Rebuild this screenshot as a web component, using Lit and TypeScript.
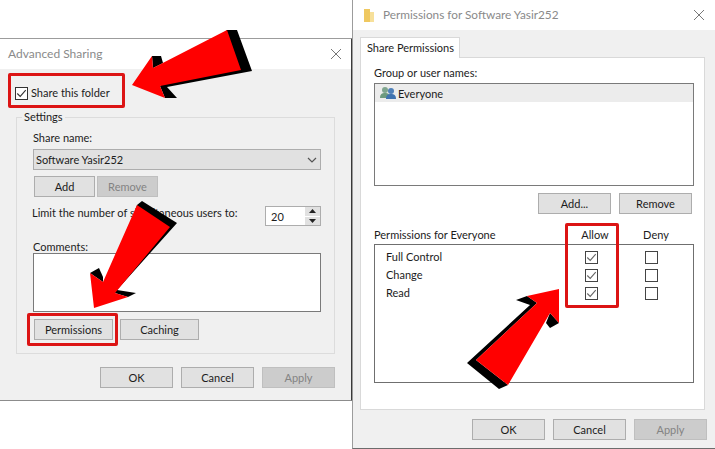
import {LitElement, html, css, svg} from 'lit';
import {customElement} from 'lit/decorators.js';

const check = (cls = '') => html`
  <span class="box ${cls}">
    <svg viewBox="0 0 13 13" width="11" height="11"><path d="M1.5 6.5 L5 10 L11.5 2.5" fill="none" stroke="currentColor" stroke-width="1.3"/></svg>
  </span>`;

const closeIcon = html`
  <svg width="10" height="10" viewBox="0 0 10 10"><path d="M0 0 L10 10 M10 0 L0 10" stroke="#777" stroke-width="1"/></svg>`;

@customElement('app-root')
export class AppRoot extends LitElement {
  static styles = css`
    :host {
      display: block;
      position: relative;
      width: 715px;
      height: 449px;
      overflow: hidden;
      background: #fff;
      font-family: Lato, Roboto, sans-serif;
      font-size: 11px;
      color: #1c1c1c;
      white-space: nowrap;
    }

    .win {
      position: absolute;
      box-sizing: border-box;
      background: #f0f0f0;
      display: flex;
      flex-direction: column;
    }

    .win--share {
      left: 0;
      top: 38px;
      width: 353px;
      height: 363px;
      border-top: 1px solid #9c9c9c;
      border-bottom: 1px solid #8c8c8c;
      border-right: 2px solid #3a3a3a;
    }

    .win--perm {
      left: 352px;
      top: 0;
      width: 363px;
      height: 449px;
      border-left: 1px solid #9c9c9c;
      border-bottom: 1px solid #6c6c6c;
    }

    .title {
      height: 30px;
      flex: none;
      background: #fff;
      display: flex;
      align-items: center;
      color: #8a8a8a;
      font-size: 12px;
      padding: 0 10px 0 8px;
    }

    .win--perm .title { padding: 0 11px 0 11px; font-size: 11.8px; }
    .title .text { flex: 1; margin-bottom: 1px; }
    .title .folder { margin-right: 9px; }

    .body { flex: 1; display: flex; flex-direction: column; }

    .btn {
      box-sizing: border-box;
      width: 73px;
      height: 21px;
      border: 1px solid #adadad;
      background: #e1e1e1;
      display: flex;
      align-items: center;
      justify-content: center;
      flex: none;
      padding-bottom: 1px;
    }

    .btn--off { background: #cccccc; border-color: #bfbfbf; color: #838383; }
    .btn--small { width: 61px; }
    .btn--mid { width: 79px; }

    .row { display: flex; gap: 8px; }
    .row--tight { gap: 2px; }

    .footer { display: flex; justify-content: flex-end; gap: 8px; }

    .box {
      box-sizing: border-box;
      width: 13px;
      height: 13px;
      border: 1px solid #333;
      background: #fff;
      display: flex;
      align-items: center;
      justify-content: center;
      flex: none;
      color: #333;
    }

    .box--plain { background: transparent; }

    /* left dialog */
    .share-check {
      display: flex;
      align-items: center;
      gap: 3px;
      margin: 17px 0 0 15px;
      height: 14px;
    }

    .share-check span:last-child { margin-bottom: 2px; }

    .group {
      position: relative;
      box-sizing: border-box;
      margin: 17px 16px 0 16px;
      height: 237px;
      width: 319px;
      border: 1px solid #dcdcdc;
      padding: 13px 13px 0 16px;
      display: flex;
      flex-direction: column;
    }

    .legend {
      position: absolute;
      left: 5px;
      top: -9px;
      background: #f0f0f0;
      padding: 0 2px;
      line-height: 15px;
    }

    .label { line-height: 13px; padding-bottom: 2px; }

    .select {
      box-sizing: border-box;
      height: 21px;
      margin-top: 3px;
      border: 1px solid #adadad;
      background: #e1e1e1;
      display: flex;
      align-items: center;
      justify-content: space-between;
      padding: 0 3px 0 2px;
    }

    .row--add { margin: 6px 0 0 1px; }

    .limit {
      display: flex;
      justify-content: space-between;
      align-items: flex-start;
      margin-top: 9px;
      height: 20px;
    }

    .limit .label { margin-left: -1px; }

    .spin {
      box-sizing: border-box;
      width: 56px;
      height: 20px;
      border: 1px solid #adadad;
      background: #fff;
      display: flex;
      align-items: center;
      padding-left: 5px;
    }

    .spin .value { flex: 1; }

    .spin .spin-arrows {
      width: 15px;
      height: 18px;
      display: flex;
      flex-direction: column;
      gap: 1px;
    }

    .spin .spin-arrows span {
      flex: 1;
      background: #e1e1e1;
      display: flex;
      align-items: center;
      justify-content: center;
    }

    .label.comments { margin-top: 14px; padding-bottom: 0; }

    .textarea {
      box-sizing: border-box;
      height: 59px;
      background: #fff;
      border: 1px solid #7a7a7a;
    }

    .row--perm { margin: 7px 0 0 1px; gap: 7px; }

    .win--share .footer { padding: 13px 16px 0 0; }

    /* right dialog */
    .tabstrip { padding: 7px 0 0 7px; height: 20px; flex: none; display: flex; }

    .tab {
      box-sizing: border-box;
      width: 100px;
      height: 21px;
      background: #fff;
      border: 1px solid #d9d9d9;
      border-bottom: none;
      padding-left: 6px;
      line-height: 19px;
      position: relative;
      z-index: 1;
    }

    .panel {
      box-sizing: border-box;
      margin: 0 10px 0 7px;
      width: 345px;
      height: 353px;
      background: #fff;
      border: 1px solid #d9d9d9;
      padding: 8px 10px 0 13px;
      display: flex;
      flex-direction: column;
    }

    .names {
      box-sizing: border-box;
      height: 103px;
      margin-top: 2px;
      border: 1px solid #7a7a7a;
    }

    .names-row {
      height: 18px;
      background: #ececec;
      display: flex;
      align-items: center;
      gap: 2px;
      padding-left: 5px;
    }

    .row--names { justify-content: flex-end; margin: 7px 2px 0 0; }

    .perm-grid {
      box-sizing: border-box;
      display: grid;
      grid-template-columns: 191px 60px 62px;
      margin-top: 13px;
      height: 17px;
      padding-bottom: 2px;
      align-items: center;
    }

    .perm-grid .allow,
    .perm-grid .deny { text-align: center; }

    .perm-box {
      box-sizing: border-box;
      height: 139px;
      border: 1px solid #6f6f6f;
      padding: 3px 0 0 11px;
      display: flex;
      flex-direction: column;
    }

    .perm-row {
      display: grid;
      grid-template-columns: 199px 60px 13px;
      height: 18px;
      align-items: center;
    }

    .perm-row .name { margin-bottom: 2px; }
    .perm-row .box { color: #666; border-color: #444; }

    .win--perm .footer { padding: 9px 8px 0 0; }

    /* annotations over the dialogs */
    .mark {
      position: absolute;
      box-sizing: border-box;
      border: 3px solid #dc1414;
      border-radius: 2px;
    }

    .mark--share { left: 8px; top: 73px; width: 117px; height: 35px; }
    .mark--perm { left: 27px; top: 313px; width: 91px; height: 33px; }
    .mark--allow { left: 565px; top: 223px; width: 54px; height: 85px; }

    .arrows-layer {
      position: absolute;
      left: 0;
      top: 0;
      pointer-events: none;
    }
  `;

  private button(label: string, cls = '') {
    return html`<div class="btn ${cls}">${label}</div>`;
  }

  private renderShare() {
    return html`
      <section class="win win--share">
        <header class="title">
          <span class="text">Advanced Sharing</span>
          ${closeIcon}
        </header>
        <div class="body">
          <label class="share-check">${check()}<span>Share this folder</span></label>
          <div class="group">
            <span class="legend">Settings</span>
            <div class="label">Share name:</div>
            <div class="select">
              <span>Software Yasir252</span>
              <svg width="10" height="6" viewBox="0 0 10 6"><path d="M1 1 L5 5 L9 1" fill="none" stroke="#555" stroke-width="1.2"/></svg>
            </div>
            <div class="row row--tight row--add">
              ${this.button('Add', 'btn--small')}
              ${this.button('Remove', 'btn--small btn--off')}
            </div>
            <div class="limit">
              <span class="label">Limit the number of simultaneous users to:</span>
              <div class="spin">
                <span class="value">20</span>
                <div class="spin-arrows">
                  <span><svg width="7" height="4" viewBox="0 0 7 4"><path d="M3.5 0 L7 4 H0 Z" fill="#222"/></svg></span>
                  <span><svg width="7" height="4" viewBox="0 0 7 4"><path d="M0 0 H7 L3.5 4 Z" fill="#222"/></svg></span>
                </div>
              </div>
            </div>
            <div class="label comments">Comments:</div>
            <div class="textarea"></div>
            <div class="row row--perm">
              ${this.button('Permissions', 'btn--mid')}
              ${this.button('Caching', 'btn--mid')}
            </div>
          </div>
          <div class="footer">
            ${this.button('OK')}${this.button('Cancel')}${this.button('Apply', 'btn--off')}
          </div>
        </div>
      </section>`;
  }

  private renderPerm() {
    const rows = ['Full Control', 'Change', 'Read'];
    return html`
      <section class="win win--perm">
        <header class="title">
          <svg class="folder" width="10" height="13" viewBox="0 0 10 13">
            <path d="M0 0 H6 V13 H0 Z" fill="#efc860"/>
            <path d="M6 3 H10 V13 H6 Z" fill="#f7e09a"/>
          </svg>
          <span class="text">Permissions for Software Yasir252</span>
          ${closeIcon}
        </header>
        <div class="body">
          <div class="tabstrip"><div class="tab">Share Permissions</div></div>
          <div class="panel">
            <div class="label">Group or user names:</div>
            <div class="names">
              <div class="names-row">
                <svg width="16" height="14" viewBox="0 0 16 14">
                  <circle cx="5" cy="4" r="3" fill="#7fa58e"/>
                  <path d="M0 12 C0 8 2 7 5 7 C8 7 10 8 10 12 Z" fill="#6d9a7e"/>
                  <circle cx="11" cy="5" r="3" fill="#4f80b8"/>
                  <path d="M6 13 C6 9 8 8 11 8 C14 8 16 9 16 13 Z" fill="#3f73b0"/>
                </svg>
                <span>Everyone</span>
              </div>
            </div>
            <div class="row row--names">
              ${this.button('Add...')}${this.button('Remove')}
            </div>
            <div class="perm-grid">
              <span class="head">Permissions for Everyone</span>
              <span class="allow">Allow</span>
              <span class="deny">Deny</span>
            </div>
            <div class="perm-box">
              ${rows.map(name => html`
                <div class="perm-row">
                  <span class="name">${name}</span>
                  ${check()}
                  <span class="box box--plain"></span>
                </div>`)}
            </div>
          </div>
          <div class="footer">
            ${this.button('OK')}${this.button('Cancel')}${this.button('Apply', 'btn--off')}
          </div>
        </div>
      </section>`;
  }

  private renderArrows() {
    return html`
      <svg class="arrows-layer" width="715" height="449" viewBox="0 0 715 449">
        ${svg`
          <path fill="#000" d="M152 56 L161 56 L163 63 L153 68 Z"/>
          <path fill="#000" d="M227 30 L237 30 L252 71 L167 87 L177 98 L165 98 L160 86 Z"/>
          <path fill="#f00" d="M132 85 L152 56 L153 68 L227 30 L241 70 L160 86 L165 98 Z"/>

          <path fill="#000" d="M90 273 L99 268 L103 277 L103 282 Z"/>
          <path fill="#000" d="M137 205 L142 201 L177 223 L117 290 L136 293 L128 297 L115 293 Z"/>
          <path fill="#f00" d="M137 205 L170 227 L115 293 L128 297 L94 308 L90 273 L103 282 Z"/>

          <path fill="#000" d="M516 300 L527 296 L537 303 L476 360 L508 385 L499 389 L467 363 L530 305 Z"/>
          <path fill="#000" d="M546 323 L550 328 L559 323 L550 313 Z"/>
          <path fill="#f00" d="M559 289 L527 296 L537 303 L476 360 L508 385 L550 313 L559 323 Z"/>
        `}
      </svg>`;
  }

  override render() {
    return html`
      ${this.renderShare()}
      ${this.renderPerm()}
      <div class="mark mark--share"></div>
      <div class="mark mark--perm"></div>
      <div class="mark mark--allow"></div>
      ${this.renderArrows()}
    `;
  }
}
